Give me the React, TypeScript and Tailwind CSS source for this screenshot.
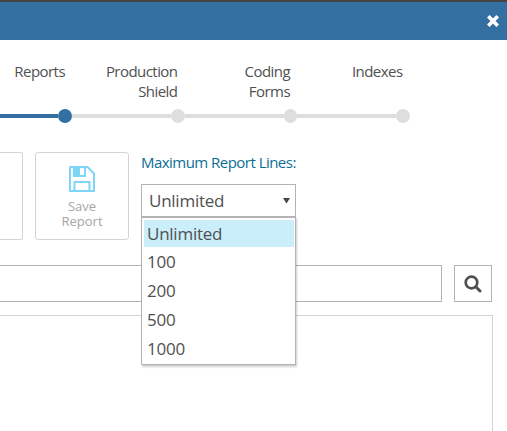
import React from "react";

const steps = [
  { label: ["Reports"], active: true },
  { label: ["Production", "Shield"], active: false },
  { label: ["Coding", "Forms"], active: false },
  { label: ["Indexes"], active: false },
];

const options = ["Unlimited", "100", "200", "500", "1000"];

function CloseIcon() {
  return (
    <svg width="12" height="12" viewBox="0 0 12 12" fill="none" stroke="white" strokeWidth="3.7">
      <path d="M1.3 1.3 10.7 10.7M10.7 1.3 1.3 10.7" />
    </svg>
  );
}

function SaveIcon() {
  return (
    <svg width="26" height="26" viewBox="0 0 26 26" fill="none" stroke="#7dd5f7" strokeWidth="2">
      <path d="M1 1H18.5L25 7.5V25H1Z" strokeLinejoin="round" />
      <path d="M5 1V10H16V1" />
      <path d="M5 1H11V10H5Z" fill="#7dd5f7" stroke="none" />
      <path d="M5.5 25V16H20.5V25" />
    </svg>
  );
}

function SearchIcon() {
  return (
    <svg width="18" height="18" viewBox="0 0 18 18" fill="none" stroke="#4f4f4f">
      <circle cx="7.5" cy="7.5" r="5.8" strokeWidth="2.7" />
      <path d="M11.8 11.8 16 16" strokeWidth="3" strokeLinecap="round" />
    </svg>
  );
}

export default function App() {
  return (
    <div className="flex h-[431px] w-[507px] flex-col overflow-hidden bg-white font-['Open_Sans','Noto_Sans',sans-serif] text-[#505050]">
      <header className="flex h-10 shrink-0 items-center justify-end border-t-2 border-[#444] bg-[#336fa1] pr-2">
        <CloseIcon />
      </header>

      <nav className="mt-[21px] flex h-[48px] shrink-0 text-right text-[15px] leading-5 tracking-[-0.55px]">
        {steps.map((step, i) => (
          <div key={step.label[0]} className={i === 0 ? "w-[65px] shrink-0" : "w-[112.5px] shrink-0"}>
            {step.label.map((line) => (
              <div key={line}>{line}</div>
            ))}
          </div>
        ))}
      </nav>

      <div className="flex h-[14px] shrink-0 items-center">
        {steps.map((step, i) => (
          <React.Fragment key={step.label[0]}>
            <div className={i === 0 ? "h-1 w-[58px] bg-[#336fa1]" : "h-1 w-[99px] bg-[#dedede]"} />
            <div className={step.active ? "size-[14px] rounded-full bg-[#336fa1]" : "size-[13.5px] rounded-full bg-[#dedede]"} />
          </React.Fragment>
        ))}
      </div>

      <section className="mt-[29px] flex h-[88px] shrink-0">
        <div className="w-[23px] rounded-r-[3px] border border-l-0 border-[#d3d3d3]" />
        <button className="ml-3 flex w-[94px] flex-col items-center rounded-[3px] border border-[#d3d3d3] pt-[13px] text-[13px] leading-[15px] text-[#a5a5a5]">
          <SaveIcon />
          <span className="mt-[7px]">Save</span>
          <span>Report</span>
        </button>
        <div className="ml-3 w-[155px]">
          <div className="h-8 whitespace-nowrap text-[15px] leading-5 tracking-[-0.53px] text-[#0b6e94]">Maximum Report Lines:</div>
          <div className="relative">
            <div className="flex h-[33px] items-center justify-between border border-[#b3b3b3] bg-white pr-[5px] pl-[7px] text-[17px] tracking-[-0.25px]">
              <span>Unlimited</span>
              <svg width="7" height="6" viewBox="0 0 7 6" fill="#444">
                <path d="M0 0H7L3.5 5.5Z" />
              </svg>
            </div>
            <ul className="absolute top-8 left-0 z-10 h-[149px] w-[155px] border border-t-2 border-[#b3b3b3] bg-white pr-px pl-[2px] pt-[2px] text-[17px] leading-[29px] tracking-[-0.25px] shadow-[1px_2px_2px_rgba(0,0,0,0.2)]">
              {options.map((option, i) => (
                <li key={option} className={i === 0 ? "h-[27px] bg-[#cbeefb] pl-[3px] leading-[27px]" : "h-[29px] pl-[3px]"}>
                  {option}
                </li>
              ))}
            </ul>
          </div>
        </div>
      </section>

      <div className="mt-[25px] flex h-[37px] shrink-0 gap-3">
        <div className="w-[442px] border border-l-0 border-[#b3b3b3]" />
        <button className="flex w-[38px] items-center justify-center border border-[#b3b3b3]">
          <SearchIcon />
        </button>
      </div>
      <main className="mt-[13px] w-[493px] flex-1 border-t border-r border-[#d3d3d3]" />
    </div>
  );
}
